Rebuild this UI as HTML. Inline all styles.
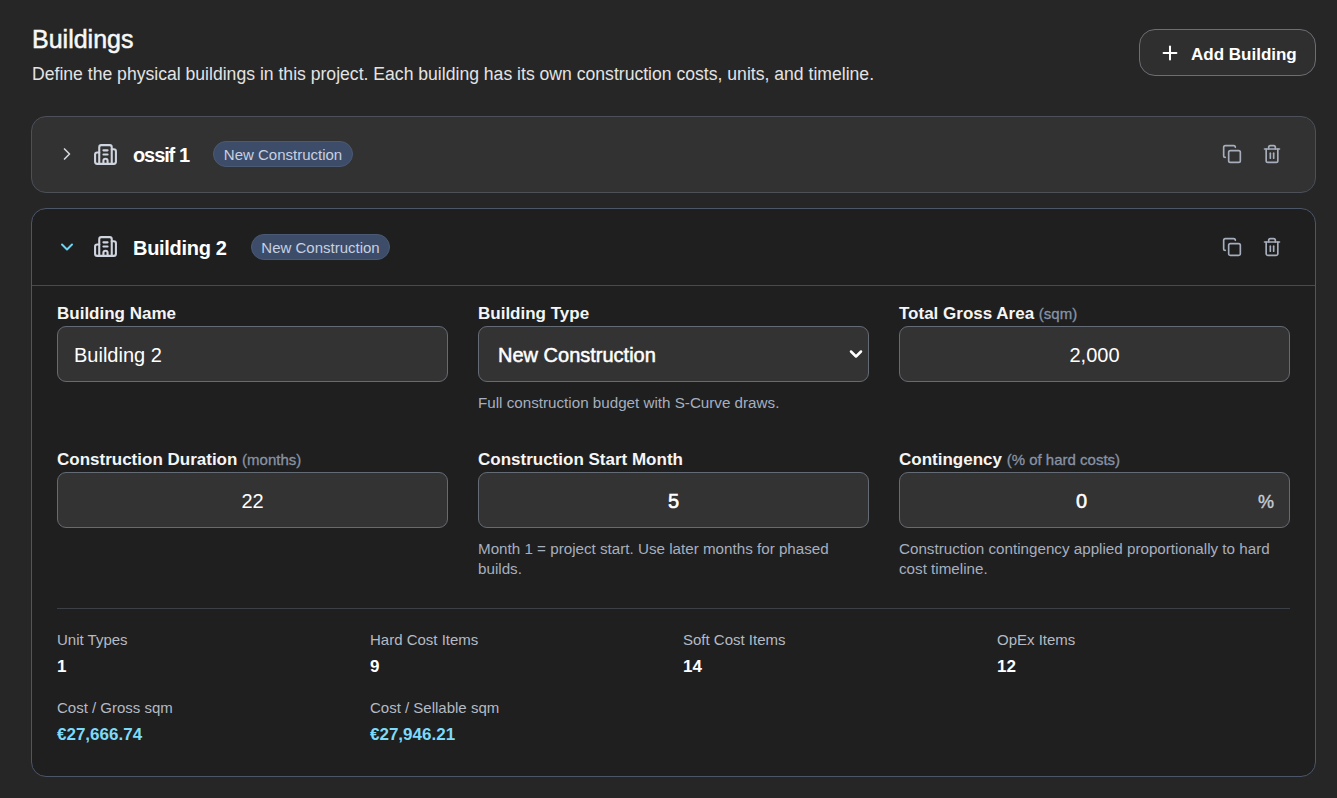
<!DOCTYPE html>
<html><head><meta charset="utf-8">
<style>
*{box-sizing:border-box;margin:0;padding:0}
html,body{width:1337px;height:798px;overflow:hidden;background:#262626;font-family:"Liberation Sans",sans-serif;color:#f3f4f6}
.abs{position:absolute}
.t{position:absolute;white-space:nowrap;line-height:1}
svg{position:absolute;fill:none;stroke-linecap:round;stroke-linejoin:round}
.card1{position:absolute;left:31px;top:116px;width:1285px;height:77px;background:#323232;border:1px solid #4b5059;border-radius:15px}
.card2{position:absolute;left:31px;top:208px;width:1285px;height:569px;background:#1f1f1f;border:1px solid #4b5669;border-radius:15px}
.badge{position:absolute;height:26px;border-radius:13px;background:#3d4d69;border:1px solid #4a5a75;color:#c8d0e0;font-size:15px;line-height:26px;text-align:center}
.inp{position:absolute;width:391px;height:56px;background:#333333;border:1px solid #656b74;border-radius:9px}
.lbl{font-size:17px;font-weight:bold;color:#f5f5f5}
.lbl span{font-weight:normal;color:#8893a6;font-size:15px;-webkit-text-stroke:0.3px #8893a6}
.help{font-size:15.2px;color:#a6afbf;line-height:20px;white-space:normal}
.sl{font-size:15px;color:#b5bac4}
.sv{font-size:17px;font-weight:bold;color:#fff}
.cy{color:#7ddaf8}
</style></head>
<body>
<div class="t" style="left:32px;top:27px;font-size:25px;color:#f7f7f7;-webkit-text-stroke:0.5px #f7f7f7">Buildings</div>
<div class="t" style="left:32px;top:66px;font-size:17.6px;color:#e3e3e3">Define the physical buildings in this project. Each building has its own construction costs, units, and timeline.</div>

<div class="abs" style="left:1139px;top:29px;width:177px;height:47px;border:1px solid #6b6e73;border-radius:16px;background:#2f2f2f"></div>
<svg style="left:1159px;top:42px" width="22" height="22" viewBox="0 0 24 24" stroke="#fff" stroke-width="2.2"><path d="M5 12h14"/><path d="M12 5v14"/></svg>
<div class="t" style="left:1191px;top:45.5px;font-size:17px;font-weight:bold;color:#fff">Add Building</div>

<div class="card1"></div>
<svg style="left:57px;top:144px" width="20" height="20" viewBox="0 0 24 24" stroke="#d1d5db" stroke-width="2"><path d="m9 18 6-6-6-6"/></svg>
<svg style="left:93px;top:142px" width="25" height="25" viewBox="0 0 24 24" stroke="#cfd5e0" stroke-width="2"><path d="M10 12h4"/><path d="M10 8h4"/><path d="M14 21v-3a2 2 0 0 0-4 0v3"/><path d="M6 10H4a2 2 0 0 0-2 2v7a2 2 0 0 0 2 2h16a2 2 0 0 0 2-2V9a2 2 0 0 0-2-2h-2"/><path d="M6 21V5a2 2 0 0 1 2-2h8a2 2 0 0 1 2 2v16"/></svg>
<div class="t" style="left:133px;top:145px;font-size:20px;font-weight:bold;color:#fff;letter-spacing:-1.1px">ossif</div><div class="t" style="left:179px;top:145px;font-size:20px;font-weight:bold;color:#fff">1</div>
<div class="badge" style="left:213px;top:141px;width:140px">New Construction</div>
<svg style="left:1222px;top:144px" width="20" height="20" viewBox="0 0 24 24" stroke="#a6adbb" stroke-width="2"><rect width="14" height="14" x="8" y="8" rx="2" ry="2"/><path d="M4 16c-1.1 0-2-.9-2-2V4c0-1.1.9-2 2-2h10c1.1 0 2 .9 2 2"/></svg>
<svg style="left:1262px;top:144px" width="20" height="20" viewBox="0 0 24 24" stroke="#a6adbb" stroke-width="2"><path d="M3 6h18"/><path d="M19 6v14c0 1-1 2-2 2H7c-1 0-2-1-2-2V6"/><path d="M8 6V4c0-1 1-2 2-2h4c1 0 2 1 2 2v2"/><path d="M10 11v6"/><path d="M14 11v6"/></svg>

<div class="card2"></div>
<div class="abs" style="left:32px;top:285px;width:1283px;height:1px;background:#424b57"></div>
<svg style="left:57px;top:237px" width="20" height="20" viewBox="0 0 24 24" stroke="#6dd3ef" stroke-width="2.4"><path d="m6 9 6 6 6-6"/></svg>
<svg style="left:93px;top:234px" width="25" height="25" viewBox="0 0 24 24" stroke="#cfd5e0" stroke-width="2"><path d="M10 12h4"/><path d="M10 8h4"/><path d="M14 21v-3a2 2 0 0 0-4 0v3"/><path d="M6 10H4a2 2 0 0 0-2 2v7a2 2 0 0 0 2 2h16a2 2 0 0 0 2-2V9a2 2 0 0 0-2-2h-2"/><path d="M6 21V5a2 2 0 0 1 2-2h8a2 2 0 0 1 2 2v16"/></svg>
<div class="t" style="left:133px;top:238px;font-size:20px;font-weight:bold;color:#fff;letter-spacing:-0.3px">Building 2</div>
<div class="badge" style="left:251px;top:234px;width:139px">New Construction</div>
<svg style="left:1222px;top:237px" width="20" height="20" viewBox="0 0 24 24" stroke="#a6adbb" stroke-width="2"><rect width="14" height="14" x="8" y="8" rx="2" ry="2"/><path d="M4 16c-1.1 0-2-.9-2-2V4c0-1.1.9-2 2-2h10c1.1 0 2 .9 2 2"/></svg>
<svg style="left:1262px;top:237px" width="20" height="20" viewBox="0 0 24 24" stroke="#a6adbb" stroke-width="2"><path d="M3 6h18"/><path d="M19 6v14c0 1-1 2-2 2H7c-1 0-2-1-2-2V6"/><path d="M8 6V4c0-1 1-2 2-2h4c1 0 2 1 2 2v2"/><path d="M10 11v6"/><path d="M14 11v6"/></svg>

<!-- row 1 -->
<div class="t lbl" style="left:57px;top:305px">Building Name</div>
<div class="inp" style="left:57px;top:326px"></div>
<div class="t" style="left:74px;top:345px;font-size:20px;color:#fff">Building 2</div>

<div class="t lbl" style="left:478px;top:305px">Building Type</div>
<div class="inp" style="left:478px;top:326px"></div>
<div class="t" style="left:498px;top:345px;font-size:20px;color:#fff;-webkit-text-stroke:0.5px #fff">New Construction</div>
<svg style="left:846px;top:344px" width="20" height="20" viewBox="0 0 24 24" stroke="#fff" stroke-width="3"><path d="m6 9 6 6 6-6"/></svg>
<div class="t help" style="left:478px;top:393px">Full construction budget with S-Curve draws.</div>

<div class="t lbl" style="left:899px;top:305px">Total Gross Area <span>(sqm)</span></div>
<div class="inp" style="left:899px;top:326px"></div>
<div class="t" style="left:899px;width:391px;text-align:center;top:345px;font-size:20px;color:#fff">2,000</div>

<!-- row 2 -->
<div class="t lbl" style="left:57px;top:451px">Construction Duration <span>(months)</span></div>
<div class="inp" style="left:57px;top:472px"></div>
<div class="t" style="left:57px;width:391px;text-align:center;top:491px;font-size:20px;color:#fff">22</div>

<div class="t lbl" style="left:478px;top:451px">Construction Start Month</div>
<div class="inp" style="left:478px;top:472px"></div>
<div class="t" style="left:478px;width:391px;text-align:center;top:491px;font-size:20px;color:#fff;-webkit-text-stroke:0.6px #fff">5</div>
<div class="t help" style="left:478px;top:539px;width:380px">Month 1 = project start. Use later months for phased builds.</div>

<div class="t lbl" style="left:899px;top:451px">Contingency <span>(% of hard costs)</span></div>
<div class="inp" style="left:899px;top:472px"></div>
<div class="t" style="left:899px;width:365px;text-align:center;top:491px;font-size:20px;color:#fff;-webkit-text-stroke:0.5px #fff">0</div>
<div class="t" style="left:1258px;top:493px;font-size:18px;color:#c8cdd6;-webkit-text-stroke:0.4px #c8cdd6">%</div>
<div class="t help" style="left:899px;top:539px;width:390px">Construction contingency applied proportionally to hard cost timeline.</div>

<div class="abs" style="left:57px;top:608px;width:1233px;height:1px;background:#3b3f46"></div>

<div class="t sl" style="left:57px;top:632px">Unit Types</div>
<div class="t sv" style="left:57px;top:658px">1</div>
<div class="t sl" style="left:370px;top:632px">Hard Cost Items</div>
<div class="t sv" style="left:370px;top:658px">9</div>
<div class="t sl" style="left:683px;top:632px">Soft Cost Items</div>
<div class="t sv" style="left:683px;top:658px">14</div>
<div class="t sl" style="left:997px;top:632px">OpEx Items</div>
<div class="t sv" style="left:997px;top:658px">12</div>

<div class="t sl" style="left:57px;top:700px">Cost / Gross sqm</div>
<div class="t sv cy" style="left:57px;top:726px">€27,666.74</div>
<div class="t sl" style="left:370px;top:700px">Cost / Sellable sqm</div>
<div class="t sv cy" style="left:370px;top:726px">€27,946.21</div>
</body></html>
